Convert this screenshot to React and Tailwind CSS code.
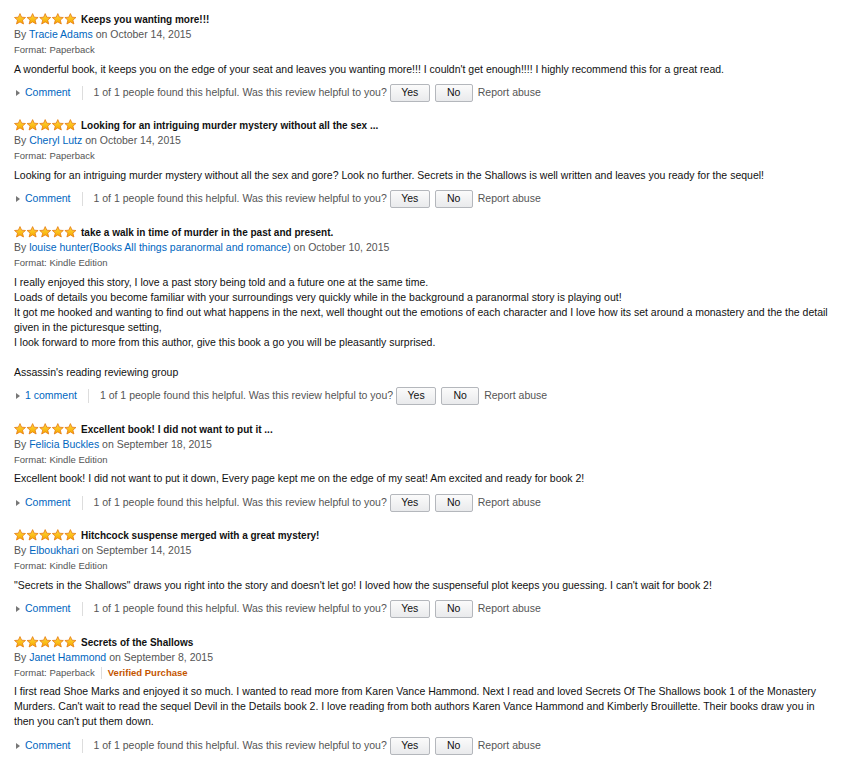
import React from "react";

const Star = ({ x }) => (
  <path
    transform={`translate(${x} 0)`}
    d="M6 0.6 L7.6 4.2 L11.5 4.5 L8.5 7.1 L9.5 11 L6 8.9 L2.5 11 L3.5 7.1 L0.5 4.5 L4.4 4.2 Z"
    fill="url(#sg)"
    stroke="#e47911"
    strokeWidth="0.8"
    strokeLinejoin="round"
  />
);

const Stars = () => (
  <svg width="63" height="12" viewBox="0 0 63 12" className="shrink-0">
    <defs>
      <linearGradient id="sg" x1="0" y1="0" x2="0" y2="1">
        <stop offset="0" stopColor="#ffd93a" />
        <stop offset="1" stopColor="#f7a800" />
      </linearGradient>
    </defs>
    {[0, 12.6, 25.2, 37.8, 50.4].map((x) => (
      <Star key={x} x={x} />
    ))}
  </svg>
);

const Btn = ({ children, w }) => (
  <span
    className={`inline-flex items-center justify-center h-[18px] ${w} border border-[#b4b7bc] rounded-[2px] bg-gradient-to-b from-[#fbfbfb] to-[#e9eaec] text-[10.5px] text-[#111]`}
  >
    {children}
  </span>
);

const reviews = [
  {
    title: "Keeps you wanting more!!!",
    author: "Tracie Adams",
    date: "October 14, 2015",
    format: "Paperback",
    body: [
      "A wonderful book, it keeps you on the edge of your seat and leaves you wanting more!!! I couldn't get enough!!!! I highly recommend this for a great read.",
    ],
    comment: "Comment",
    gap: "mt-[5px]",
    agap: "mt-[5px]",
    mb: "mb-[13px]",
  },
  {
    title: "Looking for an intriguing murder mystery without all the sex ...",
    author: "Cheryl Lutz",
    date: "October 14, 2015",
    format: "Paperback",
    body: [
      "Looking for an intriguing murder mystery without all the sex and gore? Look no further. Secrets in the Shallows is well written and leaves you ready for the sequel!",
    ],
    comment: "Comment",
    gap: "mt-[5px]",
    agap: "mt-[5px]",
    mb: "mb-[14px]",
  },
  {
    title: "take a walk in time of murder in the past and present.",
    author: "louise hunter(Books All things paranormal and romance)",
    date: "October 10, 2015",
    format: "Kindle Edition",
    body: [
      "I really enjoyed this story, I love a past story being told and a future one at the same time.",
      "Loads of details you become familiar with your surroundings very quickly while in the background a paranormal story is playing out!",
      "It got me hooked and wanting to find out what happens in the next, well thought out the emotions of each character and I love how its set around a monastery and the the detail given in the picturesque setting,",
      "I look forward to more from this author, give this book a go you will be pleasantly surprised.",
      "\u00a0",
      "Assassin's reading reviewing group",
    ],
    comment: "1 comment",
    gap: "mt-[5px]",
    agap: "mt-[5px]",
    mb: "mb-[14px]",
  },
  {
    title: "Excellent book! I did not want to put it ...",
    author: "Felicia Buckles",
    date: "September 18, 2015",
    format: "Kindle Edition",
    body: [
      "Excellent book! I did not want to put it down, Every page kept me on the edge of my seat! Am excited and ready for book 2!",
    ],
    comment: "Comment",
    gap: "mt-[4px]",
    agap: "mt-[6px]",
    mb: "mb-[13px]",
  },
  {
    title: "Hitchcock suspense merged with a great mystery!",
    author: "Elboukhari",
    date: "September 14, 2015",
    format: "Kindle Edition",
    body: [
      "\"Secrets in the Shallows\" draws you right into the story and doesn't let go! I loved how the suspenseful plot keeps you guessing. I can't wait for book 2!",
    ],
    comment: "Comment",
    gap: "mt-[5px]",
    agap: "mt-[5px]",
    mb: "mb-[14px]",
  },
  {
    title: "Secrets of the Shallows",
    author: "Janet Hammond",
    date: "September 8, 2015",
    format: "Paperback",
    verified: true,
    body: [
      "I first read Shoe Marks and enjoyed it so much. I wanted to read more from Karen Vance Hammond. Next I read and loved Secrets Of The Shallows book 1 of the Monastery Murders. Can't wait to read the sequel Devil in the Details book 2. I love reading from both authors Karen Vance Hammond and Kimberly Brouillette. Their books draw you in then you can't put them down.",
    ],
    comment: "Comment",
    gap: "mt-[4px]",
    agap: "mt-[6px]",
    mb: "mb-0",
  },
];

const Review = ({ r }) => (
  <div className={r.mb}>
    <div className="flex items-center h-[16px] gap-[4px]">
      <Stars />
      <span className="font-bold text-[10px] text-[#111]">{r.title}</span>
    </div>
    <div className="h-[15px] leading-[15px] text-[10.5px] text-[#555]">
      By <span className="text-[#0066c0]">{r.author}</span> on {r.date}
    </div>
    <div className="h-[15px] leading-[15px] text-[9.5px] text-[#555] flex items-center">
      <span>Format: {r.format}</span>
      {r.verified && (
        <>
          <span className="mx-[6px] w-px h-[12px] bg-[#ddd]" />
          <span className="font-bold text-[#c45500] text-[9.5px]">Verified Purchase</span>
        </>
      )}
    </div>
    <div className={`${r.gap} text-[10.5px] leading-[15px] text-[#111] pr-[14px]`}>
      {r.body.map((l, i) => (
        <div key={i}>{l}</div>
      ))}
    </div>
    <div className={`${r.agap} h-[22px] flex items-center text-[10.5px]`}>
      <span className="w-0 h-0 border-y-[3px] border-y-transparent border-l-[4px] border-l-[#777] ml-[2px] mr-[5px]" />
      <span className="text-[#0066c0]">{r.comment}</span>
      <span className="w-px h-[14px] bg-[#ddd] mx-[11px]" />
      <span className="text-[#555]">1 of 1 people found this helpful. Was this review helpful to you?</span>
      <span className="ml-[3px] flex items-center gap-[5px]">
        <Btn w="w-[40px]">Yes</Btn>
        <Btn w="w-[38px]">No</Btn>
      </span>
      <span className="ml-[5px] text-[#555]">Report abuse</span>
    </div>
  </div>
);

export default function App() {
  return (
    <div
      className="w-[850px] h-[758px] bg-white overflow-hidden pl-[14px] pt-[11px]"
      style={{ fontFamily: '"Liberation Sans", Arial, sans-serif' }}
    >
      {reviews.map((r, i) => (
        <Review key={i} r={r} />
      ))}
    </div>
  );
}
